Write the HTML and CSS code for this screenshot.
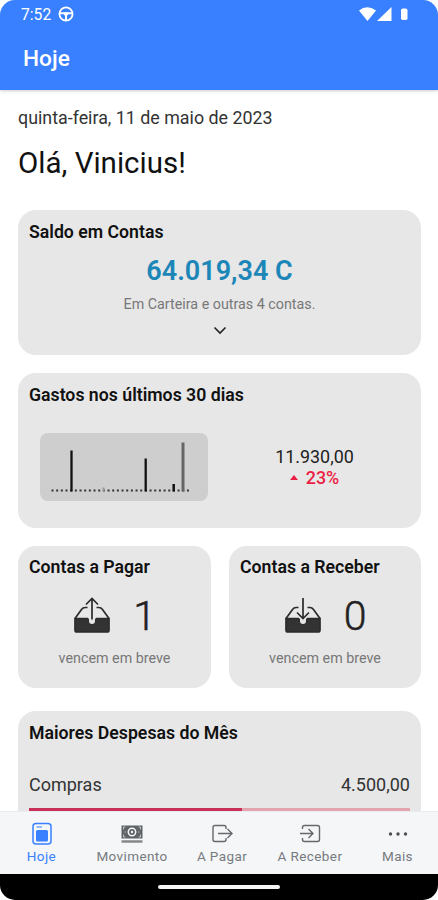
FILE: index.html
```
<!DOCTYPE html>
<html lang="pt-BR">
<head>
    <meta charset="UTF-8">
    <meta name="viewport" content="width=device-width, initial-scale=1.0">
    <title>Hoje</title>
    <link rel="stylesheet" href="styles.css">
</head>
<body>
    <div class="phone">
        <!-- Cabeçalho -->
        <header class="header">
            <div class="status-bar">
                <span class="clock">7:52</span>
                <svg class="wheel" width="16" height="16" viewBox="0 0 16 16" fill="none" stroke="#fff">
                    <circle cx="8" cy="8" r="6.6" stroke-width="1.8"/>
                    <path d="M2 7.2h12M8 8v6" stroke-width="2"/>
                    <circle cx="8" cy="8" r="1.6" fill="#fff"/>
                </svg>
                <svg class="signals" width="52" height="16" viewBox="0 0 52 16" fill="#fff">
                    <path d="M0 4.5Q8-2 17 4.5L8.5 15z"/>
                    <path d="M32.5 1v14H18z"/>
                    <rect x="42" y="2.5" width="6.500" height="11.500" rx="1.800"/>
                </svg>
            </div>
            <h1 class="title">Hoje</h1>
        </header>

        <!-- Conteúdo -->
        <main class="content">
            <p class="date">quinta-feira, 11 de maio de 2023</p>
            <h2 class="greeting">Olá, Vinicius!</h2>

            <section class="card balance">
                <h3 class="card-title">Saldo em Contas</h3>
                <div class="balance-value">64.019,34 C</div>
                <div class="balance-info">Em Carteira e outras 4 contas.</div>
                <svg class="chevron" width="14" height="9" viewBox="0 0 14 9" fill="none" stroke="#222" stroke-width="1.6">
                    <path d="M1.5 1.5L7 7l5.500-5.500"/>
                </svg>
            </section>

            <section class="card spending">
                <h3 class="card-title">Gastos nos últimos 30 dias</h3>
                <div class="spending-row">
                    <svg class="chart" width="168" height="68" viewBox="0 0 168 68">
                        <path d="M11.500 57.500H150" stroke="#333" stroke-width="2" stroke-dasharray="2 2.670"/>
                        <path d="M31.500 17.500v41M105.700 25.500v33" stroke="#111" stroke-width="2.300"/>
                        <path d="M133.700 51v7.500" stroke="#111" stroke-width="2.500"/>
                        <path d="M143 9.500v49" stroke="#666" stroke-width="3"/>
                        <path d="M63.500 54.500v4" stroke="#999" stroke-width="2"/>
                    </svg>
                    <div class="spending-info">
                        <div class="spending-value">11.930,00</div>
                        <div class="spending-change"><span class="arrow-up"></span>23%</div>
                    </div>
                </div>
            </section>

            <div class="bills">
                <section class="card bill">
                    <h3 class="card-title">Contas a Pagar</h3>
                    <div class="bill-row">
                        <svg width="38" height="38" viewBox="0 0 38 38" fill="none" stroke="#2b2b2b" stroke-width="1.700">
                            <path d="M14.500 10.500h-2.500Q10 10.500 8.500 12.500L2 21.500M23.500 10.500h2.500q2 0 3.500 2l6.500 9"/>
                            <path d="M2 21.500h12.500c1 0 1 5 4.500 5s3.500-5 4.500-5H36V33q0 2-2 2H4q-2 0-2-2z" fill="#333"/>
                            <path d="M19 24V6" stroke="#e7e7e7" stroke-width="6" stroke-linecap="round"/>
                            <path d="M19 22.500V2M13 7.500l6-6 6 6"/>
                        </svg>
                        <span class="bill-count">1</span>
                    </div>
                    <div class="bill-info">vencem em breve</div>
                </section>
                <section class="card bill">
                    <h3 class="card-title">Contas a Receber</h3>
                    <div class="bill-row">
                        <svg width="38" height="38" viewBox="0 0 38 38" fill="none" stroke="#2b2b2b" stroke-width="1.700">
                            <path d="M14.500 10.500h-2.500Q10 10.500 8.500 12.500L2 21.500M23.500 10.500h2.500q2 0 3.500 2l6.500 9"/>
                            <path d="M2 21.500h12.500c1 0 1 5 4.500 5s3.500-5 4.500-5H36V33q0 2-2 2H4q-2 0-2-2z" fill="#333"/>
                            <path d="M19 24V6" stroke="#e7e7e7" stroke-width="6" stroke-linecap="round"/>
                            <path d="M19 1v20.500M13 15.500l6 6 6-6"/>
                        </svg>
                        <span class="bill-count">0</span>
                    </div>
                    <div class="bill-info">vencem em breve</div>
                </section>
            </div>

            <section class="card expenses">
                <h3 class="card-title">Maiores Despesas do Mês</h3>
                <div class="expense">
                    <span class="expense-name">Compras</span>
                    <span class="expense-value">4.500,00</span>
                </div>
                <div class="progress"><div class="progress-bar"></div></div>
            </section>
        </main>

        <!-- Menu inferior -->
        <nav class="tabs">
            <div class="tab active">
                <svg width="24" height="24" viewBox="0 0 24 24" fill="none" stroke="#3880ff">
                    <rect x="3" y="1.500" width="18" height="20.500" rx="3" stroke-width="1.500"/>
                    <rect x="6" y="8" width="12" height="11.500" rx="1.500" fill="#3880ff" stroke="none"/>
                    <path d="M6.500 5H12" stroke-width="1.200"/>
                </svg>
                <span class="label">Hoje</span>
            </div>
            <div class="tab">
                <svg width="24" height="24" viewBox="0 0 24 24">
                    <rect x="1.500" y="3.500" width="21" height="13" fill="#5f6366"/>
                    <circle cx="12" cy="10" r="3.700" fill="#5f6366" stroke="#f4f6f8" stroke-width="1.500"/>
                    <circle cx="12" cy="10" r="1.200" fill="#f4f6f8"/>
                    <path d="M3.500 7.500V5h2M18.500 5h2v2.500M3.500 12.500V15h2M18.500 15h2v-2.500M4.500 10h1.500M18 10h1.500" fill="none" stroke="#d5d8da" stroke-width="0.800"/>
                    <path d="M1.500 19.500h21" stroke="#85898c" stroke-width="2.500"/>
                </svg>
                <span class="label">Movimento</span>
            </div>
            <div class="tab">
                <svg width="24" height="24" viewBox="0 0 24 24" fill="none" stroke="#65696c" stroke-width="1.400">
                    <path d="M16 7V5.500Q16 3.500 14 3.500H5Q3 3.500 3 5.500v12q0 2 2 2h9q2 0 2-2V16M8 11.500h14M17.500 7l4.500 4.500-4.500 4.500"/>
                </svg>
                <span class="label">A Pagar</span>
            </div>
            <div class="tab">
                <svg width="24" height="24" viewBox="0 0 24 24" fill="none" stroke="#65696c" stroke-width="1.400">
                    <path d="M4.500 7V5.500q0-2 2-2h13q2 0 2 2v12q0 2-2 2h-13q-2 0-2-2V16M2 11.500h13M10.500 7l4.500 4.500-4.500 4.500"/>
                </svg>
                <span class="label">A Receber</span>
            </div>
            <div class="tab">
                <svg width="24" height="24" viewBox="0 0 24 24" fill="#4b4f52">
                    <circle cx="4.500" cy="12" r="1.700"/>
                    <circle cx="12" cy="12" r="1.700"/>
                    <circle cx="19.500" cy="12" r="1.700"/>
                </svg>
                <span class="label">Mais</span>
            </div>
        </nav>
        <div class="system-bar"><div class="handle"></div></div>
    </div>
</body>
</html>
```
FILE: styles.css
```
* {
    margin: 0;
    padding: 0;
    box-sizing: border-box;
}

body {
    background-color: #fff;
    font-family: Roboto, sans-serif;
    color: #222;
}

svg {
    display: block;
    flex-shrink: 0;
}

.phone {
    display: flex;
    flex-direction: column;
    width: 438px;
    height: 900px;
    border-radius: 15px;
    overflow: hidden;
}

/* Cabeçalho */
.header {
    height: 90px;
    flex-shrink: 0;
    background-color: #3880ff;
    color: #fff;
    box-shadow: 0 1px 3px rgba(0, 0, 0, 0.2);
}

.status-bar {
    display: flex;
    align-items: center;
    height: 28px;
    padding: 0 27px 0 21px;
}

.clock {
    width: 37px;
    font-size: 15.7px;
}

.signals {
    margin-left: auto;
}

.title {
    padding-left: 23px;
    font-size: 22.7px;
    font-weight: 500;
    line-height: 62px;
}

/* Conteúdo */
.content {
    flex: 1;
    min-height: 0;
    overflow: hidden;
    padding: 16px 17px 0 18px;
}

.date {
    font-size: 17.85px;
    line-height: 24px;
    color: #333;
}

.greeting {
    margin-bottom: 30px;
    padding-top: 16px;
    font-size: 29.5px;
    font-weight: 400;
    line-height: 34px;
    color: #111;
}

.card {
    margin-bottom: 18px;
    padding: 10px 11px 0;
    border-radius: 18px;
    background-color: #e7e7e7;
}

.card-title {
    font-size: 17.7px;
    font-weight: 600;
    line-height: 24px;
    color: #111;
    white-space: nowrap;
}

.balance {
    display: flex;
    flex-direction: column;
    height: 145px;
}

.balance-value {
    margin-top: 10px;
    font-size: 27px;
    font-weight: 600;
    line-height: 34px;
    text-align: center;
    color: #1c86b8;
}

.balance-info {
    margin-top: 6px;
    font-size: 14.3px;
    line-height: 20px;
    text-align: center;
    color: #777;
}

.chevron {
    margin: 12px auto 0;
}

.spending {
    height: 155px;
}

.spending-row {
    display: flex;
    align-items: center;
    margin: 26px 0 0 11px;
}

.chart {
    border-radius: 8px;
    background-color: #cecece;
}

.spending-info {
    flex: 1;
    padding-left: 11px;
    text-align: center;
}

.spending-value {
    font-size: 17.9px;
    line-height: 21px;
}

.spending-change {
    display: flex;
    align-items: center;
    justify-content: center;
    gap: 8px;
    font-size: 17.9px;
    font-weight: 500;
    line-height: 21px;
    color: #eb1f45;
}

.arrow-up {
    border: 4px solid transparent;
    border-top: 0;
    border-bottom: 5px solid #eb1f45;
}

/* Contas a pagar e a receber */
.bills {
    display: grid;
    grid-template-columns: 193px 192px;
    gap: 18px;
    margin-bottom: 23px;
}

.bill {
    height: 142px;
    margin-bottom: 0;
    padding-top: 9px;
}

.bill-row {
    display: flex;
    align-items: center;
    justify-content: center;
    gap: 22px;
    height: 50px;
    margin-top: 12px;
}

.bill-count {
    font-size: 41px;
    font-weight: 300;
    line-height: 52px;
    -webkit-text-stroke: 0.5px #222;
}

.bill-info {
    margin-top: 7px;
    font-size: 14.3px;
    line-height: 20px;
    text-align: center;
    color: #777;
}

.expenses {
    height: 160px;
}

.expense {
    display: flex;
    justify-content: space-between;
    margin-top: 28px;
    font-size: 18px;
    line-height: 24px;
    color: #333;
}

.progress {
    height: 3px;
    margin-top: 11px;
    background-color: #e3a4b0;
}

.progress-bar {
    width: 56%;
    height: 100%;
    background-color: #c9305a;
}

/* Menu inferior */
.tabs {
    display: grid;
    grid-template-columns: 83px 98px 82px 94px 81px;
    height: 63px;
    flex-shrink: 0;
    background-color: #f4f6f8;
    border-top: 1px solid #e9ebed;
    color: #777b7f;
}

.tab {
    display: flex;
    flex-direction: column;
    align-items: center;
    padding-top: 10px;
}

.label {
    margin-top: 1px;
    font-size: 13.5px;
    line-height: 18px;
    letter-spacing: 0.4px;
    white-space: nowrap;
}

.tab.active {
    color: #3880ff;
}

/* Barra do sistema */
.system-bar {
    display: flex;
    justify-content: center;
    height: 26px;
    flex-shrink: 0;
    padding-top: 11px;
    background-color: #000;
}

.handle {
    width: 122px;
    height: 4px;
    border-radius: 2px;
    background-color: #f4f4f4;
}
```
